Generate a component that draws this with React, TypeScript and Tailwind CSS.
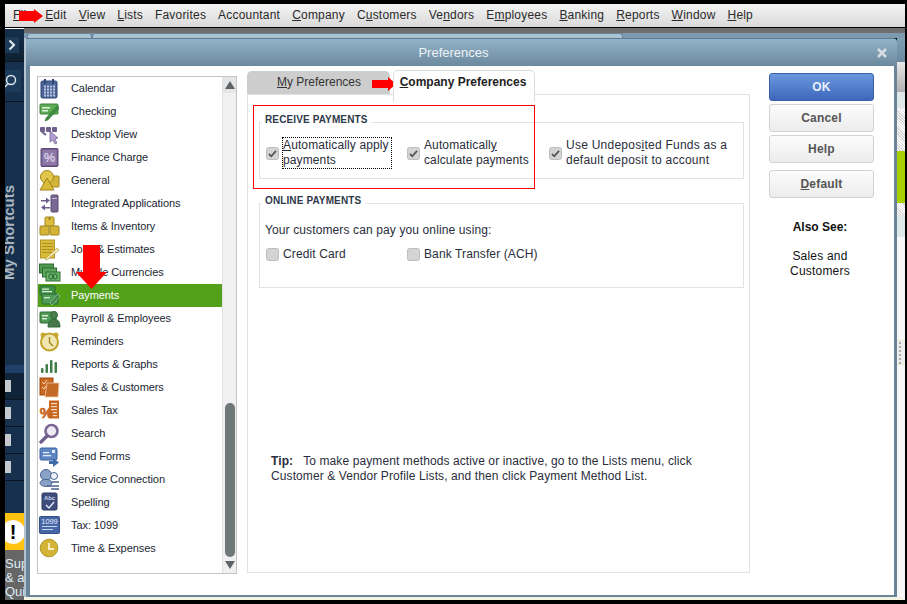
import React from 'react';

const S = ({ children }: { children: React.ReactNode }) => (
  <svg width="22" height="22" viewBox="0 0 22 22" className="shrink-0">{children}</svg>
);

const icons: Record<string, React.ReactNode> = {
  Calendar: (
    <>
      <rect x="2" y="3" width="16" height="17" rx="1.5" fill="#4c6496" stroke="#2f4778" />
      <rect x="5" y="1" width="2" height="5" fill="#2f4778" />
      <rect x="13" y="1" width="2" height="5" fill="#2f4778" />
      {[8, 11, 14, 17].map((y) => [5, 8, 11, 14].map((x) => <rect key={x + '-' + y} x={x} y={y - 0.5} width="2" height="2" fill="#b9c6e0" />))}
    </>
  ),
  Checking: (
    <>
      <rect x="1" y="3" width="18" height="10" rx="1" fill="#5cab55" stroke="#3f7f3c" />
      <rect x="3" y="6" width="8" height="1.5" fill="#e4f3df" />
      <rect x="3" y="9" width="6" height="1.5" fill="#e4f3df" />
      <path d="M7 17 L18 5 L20 7 L9 19 L6 20 Z" fill="#3e8f43" stroke="#2c6b32" strokeWidth="0.5" />
    </>
  ),
  'Desktop View': (
    <>
      <rect x="1" y="3" width="5" height="5" rx="1" fill="#6e5f8c" />
      <rect x="7" y="3" width="5" height="5" rx="1" fill="#6e5f8c" />
      <rect x="13" y="3" width="5" height="5" rx="1" fill="#6e5f8c" />
      <path d="M11 7 L19 14 L16 15 L18 19 L16 20 L14 16 L11 18 Z" fill="#b19ed0" stroke="#6e5f8c" strokeWidth="0.7" />
      <path d="M3 8 L7 11" stroke="#6e5f8c" strokeWidth="2" />
    </>
  ),
  'Finance Charge': (
    <>
      <rect x="2" y="1.5" width="17" height="18" rx="1" fill="#75608f" stroke="#5c4a75" />
      <rect x="3.5" y="3" width="14" height="15" fill="#8d78a8" />
      <text x="10.5" y="15" textAnchor="middle" fontSize="13" fontWeight="700" fill="#d8cde6">%</text>
    </>
  ),
  General: (
    <>
      <rect x="10" y="6" width="10" height="11" rx="1" fill="#d3b436" stroke="#a08520" />
      <circle cx="8" cy="7" r="6.5" fill="#e2c64a" stroke="#a08520" />
      <path d="M8 8 L15 20 L1 20 Z" fill="#d9bb38" stroke="#a08520" />
    </>
  ),
  'Integrated Applications': (
    <>
      <rect x="12" y="2" width="7" height="17" rx="1" fill="#7a6894" stroke="#5c4a75" />
      <rect x="13" y="5" width="5" height="1" fill="#c6badb" />
      <path d="M2 7 H7 V4.5 L11 7.5 L7 10.5 V8.5 H2 Z" fill="#6e5f8c" />
      <path d="M11 14 H6 V11.5 L2 14.5 L6 17.5 V15.5 H11 Z" fill="#6e5f8c" />
    </>
  ),
  'Items & Inventory': (
    <>
      <rect x="6" y="1" width="9" height="9" rx="1" fill="#dcbd3c" stroke="#a08520" />
      <rect x="1" y="10" width="9" height="9" rx="1" fill="#d3b436" stroke="#a08520" />
      <rect x="11" y="10" width="9" height="9" rx="1" fill="#d3b436" stroke="#a08520" />
      <rect x="9.5" y="1" width="2" height="3" fill="#a08520" />
    </>
  ),
  'Jobs & Estimates': (
    <>
      <rect x="1.5" y="1" width="14" height="18" fill="#d9bb38" stroke="#b0952a" />
      {[4, 7, 10, 13].map((y) => <rect key={y} x="3" y={y} width="11" height="1" fill="#a98f25" />)}
      <path d="M6 20 L18 9 L20 11 L8 21 Z" fill="#f1e7b8" stroke="#b0952a" strokeWidth="0.6" />
    </>
  ),
  'Multiple Currencies': (
    <>
      <rect x="0.5" y="2" width="14" height="9" fill="#4f9850" stroke="#2f6b34" />
      <rect x="3.5" y="6" width="14" height="9" fill="#5aa75a" stroke="#2f6b34" />
      <rect x="7" y="10" width="14" height="9" fill="#6ab86a" stroke="#2f6b34" />
      <rect x="10" y="12" width="3.5" height="5" rx="1.5" fill="none" stroke="#21592a" />
      <rect x="14.5" y="12" width="3.5" height="5" rx="1.5" fill="none" stroke="#21592a" />
    </>
  ),
  Payments: (
    <>
      <rect x="1" y="1" width="15" height="9" rx="1" fill="#3f8f47" stroke="#2a6934" />
      <rect x="3" y="3.5" width="7" height="1.3" fill="#d7ecd3" />
      <rect x="3" y="6" width="10" height="1.3" fill="#d7ecd3" />
      <rect x="3" y="9" width="16" height="10" rx="1" fill="#4d9c55" stroke="#2a6934" />
      <rect x="5" y="12" width="6" height="1.3" fill="#d7ecd3" />
      <path d="M11 18 L19 9 L21 11 L13 20 Z" fill="#3b7f44" stroke="#d7ecd3" strokeWidth="0.5" />
    </>
  ),
  'Payroll & Employees': (
    <>
      <rect x="1" y="4" width="16" height="11" rx="1" fill="#4f9a55" stroke="#2f6b34" />
      <rect x="3" y="7" width="6" height="1.4" fill="#e0f0dc" />
      <rect x="3" y="10" width="5" height="1.4" fill="#e0f0dc" />
      <circle cx="15" cy="7" r="3.5" fill="#4b7d4e" stroke="#2f6b34" />
      <path d="M9 19 Q9 11 15 11 Q21 11 21 19 Z" fill="#47774a" stroke="#2f6b34" />
    </>
  ),
  Reminders: (
    <>
      <circle cx="4" cy="4" r="2.5" fill="#c9a92f" />
      <circle cx="17" cy="4" r="2.5" fill="#c9a92f" />
      <circle cx="10.5" cy="11" r="8.5" fill="#f0e6b2" stroke="#c4a42c" strokeWidth="2" />
      <path d="M10.5 6 V11.5 L14 15" fill="none" stroke="#a08520" strokeWidth="1.4" />
    </>
  ),
  'Reports & Graphs': (
    <>
      <rect x="2" y="14" width="2.5" height="5" rx="1" fill="#3e7d46" />
      <rect x="6.5" y="10" width="2.5" height="9" rx="1" fill="#3e7d46" />
      <rect x="11" y="6" width="2.5" height="13" rx="1" fill="#3e7d46" />
      <rect x="15.5" y="8" width="2.5" height="11" rx="1" fill="#3e7d46" />
    </>
  ),
  'Sales & Customers': (
    <>
      <rect x="1" y="1" width="13" height="17" fill="#c9661f" stroke="#9a4c14" />
      <path d="M8 6 L20 6 L19 20 L6 20 Z" fill="#c36a27" stroke="#f0c9a2" strokeWidth="0.8" />
      <path d="M3 5 L5 7 L8 3 M3 10 L5 12 L7 9" fill="none" stroke="#f5dcc0" strokeWidth="1" />
    </>
  ),
  'Sales Tax': (
    <>
      <rect x="10" y="0.5" width="10" height="18" fill="#c9661f" />
      {[3, 6, 9, 12, 15].map((y) => <rect key={y} x="12" y={y} width="6" height="1.2" fill="#f5dcc0" />)}
      <text x="7.5" y="18" textAnchor="middle" fontSize="15" fontWeight="700" fill="#c9661f" stroke="#c9661f" strokeWidth="0.6">%</text>
    </>
  ),
  Search: (
    <>
      <circle cx="12.5" cy="8" r="6" fill="#efeaf4" stroke="#7b6795" strokeWidth="2.6" />
      <path d="M8 13 L2 19" stroke="#6e5f8c" strokeWidth="3.4" strokeLinecap="round" />
    </>
  ),
  'Send Forms': (
    <>
      <rect x="1" y="2" width="17" height="12" rx="1.5" fill="#5f86c4" stroke="#3a5f9c" />
      <rect x="4" y="6" width="6" height="1.3" fill="#e3ecf8" />
      <rect x="4" y="9" width="8" height="1.3" fill="#e3ecf8" />
      <rect x="13" y="4" width="3" height="3" fill="#e3ecf8" />
      <path d="M10 15 H14 V12 L20 16.5 L14 21 V18 H10 Z" fill="#3f6ba8" />
    </>
  ),
  'Service Connection': (
    <>
      <circle cx="7" cy="6" r="5.5" fill="#8aa2c6" stroke="#4a648f" />
      <ellipse cx="7" cy="14" rx="6" ry="3.5" fill="#8aa2c6" stroke="#4a648f" />
      <circle cx="15" cy="7" r="3.5" fill="#eef2f8" stroke="#4a648f" />
      <path d="M8 17 H20 M12 13 H20 M12 20 H20" stroke="#4a648f" strokeWidth="1.4" />
    </>
  ),
  Spelling: (
    <>
      <rect x="3" y="1" width="15" height="17" rx="1.5" fill="#3d4e7d" stroke="#2a3860" />
      <text x="10.5" y="8" textAnchor="middle" fontSize="6" fontWeight="700" fill="#c8d2ea">Abc</text>
      <path d="M7 13 L10 16 L15 10" fill="none" stroke="#dfe6f5" strokeWidth="1.5" />
    </>
  ),
  'Tax: 1099': (
    <>
      <rect x="0.5" y="1.5" width="20" height="17" rx="1" fill="#4766a6" stroke="#334e85" />
      <text x="10.5" y="9" textAnchor="middle" fontSize="7.5" fill="#e3ebfa">1099</text>
      <rect x="3" y="11" width="15" height="1" fill="#c9d6ef" />
      <rect x="3" y="14" width="11" height="1" fill="#c9d6ef" />
    </>
  ),
  'Time & Expenses': (
    <>
      <circle cx="10" cy="10" r="8.8" fill="#d3b436" stroke="#b0952a" />
      <path d="M10 5 V11 H15" fill="none" stroke="#f6edc2" strokeWidth="2" />
    </>
  ),
};

const names = Object.keys(icons);

const Check = ({ checked }: { checked?: boolean }) => (
  <svg width="13" height="13" viewBox="0 0 13 13" className="shrink-0">
    <rect x="0.5" y="0.5" width="12" height="12" rx="2" fill="#d4d4d4" stroke="#bdbdbd" />
    {checked && <path d="M3 7 L5.3 9.3 L10 3.8" fill="none" stroke="#555" strokeWidth="1.8" />}
  </svg>
);

const menu: [string, string, string][] = [
  ['', 'F', 'ile'], ['', 'E', 'dit'], ['', 'V', 'iew'], ['', 'L', 'ists'], ['Favorites', '', ''], ['Accountant', '', ''],
  ['', 'C', 'ompany'], ['C', 'u', 'stomers'], ['Ve', 'n', 'dors'], ['E', 'm', 'ployees'], ['', 'B', 'anking'], ['', 'R', 'eports'], ['', 'W', 'indow'], ['', 'H', 'elp'],
];

const Btn = ({ children, className = 'border-[#d2d2d2] from-[#fcfcfc] to-[#ececec] text-[#555]' }: { children: React.ReactNode; className?: string }) => (
  <div className={`h-[28px] w-[105px] shrink-0 flex items-center justify-center rounded-[3px] border bg-gradient-to-b text-[12px] font-bold ${className}`}>
    {children}
  </div>
);

const Legend = ({ children }: { children: React.ReactNode }) => (
  <div className="absolute left-[1px] top-[-10px] bg-white px-[4px] text-[10px] leading-[14px] font-bold text-[#2f3a4a]">{children}</div>
);

export default function App() {
  return (
    <div className="relative w-[907px] h-[604px] overflow-hidden bg-black flex flex-col pt-[4px] pb-[4px] pl-[5px] pr-[2px] font-['Liberation_Sans',Arial,sans-serif] text-[#1b1f33]">
      {/* menu bar */}
      <div className="h-[23px] shrink-0 flex items-center gap-[12px] pl-[8px] pb-[1px] bg-gradient-to-b from-[#f4f4f4] to-[#d9d9d9] text-[12px] tracking-[0.2px] text-[#2a2a2a]">
        {menu.map(([a, u, b], i) => (
          <span key={i}>{a}{u && <u>{u}</u>}{b}</span>
        ))}
      </div>
      <div className="h-px shrink-0 bg-black" />

      <div className="flex-1 flex min-h-0">
        {/* left rail */}
        <div className="w-[19px] shrink-0 flex flex-col overflow-hidden bg-[#16304d]">
          <div className="h-px bg-white" />
          <div className="h-[33px] pt-[8px] bg-gradient-to-b from-[#16304d] to-[#0f2033] border-b border-[#0b1622]">
            <div className="h-[16px] w-[14px] bg-[#1d3a59] flex items-center justify-center">
              <svg width="8" height="12" viewBox="0 0 8 12"><path d="M1.5 1.5 L6 6 L1.5 10.5" fill="none" stroke="#e6edf2" strokeWidth="2" /></svg>
            </div>
          </div>
          <div className="h-[40px] pt-[8px] border-b border-[#0b1622]">
            <div className="h-[22px] w-[16px] bg-[#1c3a5a] flex items-center">
              <svg width="14" height="16" viewBox="0 0 14 16"><circle cx="6" cy="7" r="4.5" fill="none" stroke="#dbe4ec" strokeWidth="1.5" /><path d="M3 10.5 L0 14" stroke="#dbe4ec" strokeWidth="1.5" /></svg>
            </div>
          </div>
          <div className="h-[177px] flex items-end">
            <div className="[writing-mode:vertical-rl] rotate-180 ml-[-4px] mb-[-1px] text-[15px] leading-[15px] font-bold whitespace-nowrap text-[#aab5c0]">My Shortcuts</div>
          </div>
          <div className="h-[86px]" />
          <div className="h-[8px] bg-[#1f4068]" />
          {[0, 1, 2, 3].map((i) => (
            <div key={i} className={`h-[27px] flex items-center border-b border-[#0b1622] ${i === 0 ? 'bg-[#0f2438]' : ''}`}>
              <div className="h-[12px] w-[6px] bg-[#c4c9cd]" />
            </div>
          ))}
          <div className="h-[32px]" />
          <div className="h-[37px] bg-[#ffc20e] flex items-center">
            <div className="ml-[-4px] h-[24px] w-[24px] shrink-0 rounded-full bg-white flex items-center justify-center text-[20px] font-bold leading-none text-black">!</div>
          </div>
          <div className="flex-1 bg-[#666] pt-[7px] text-[13px] leading-[14px] text-[#dcecf8] whitespace-nowrap">
            <div>Sup</div>
            <div>&amp; al</div>
            <div>Qui</div>
          </div>
        </div>

        {/* main */}
        <div className="flex-1 flex flex-col min-w-0">
          <div className="h-[5px] shrink-0 bg-[#6f6f6f]" />
          <div className="h-[5px] shrink-0 flex bg-[#7c9bb1]">
            <div className="ml-[3px] w-[65px] rounded-t-[3px] border border-b-0 border-[#6b8499] bg-[#a9c2d2]" />
            <div className="w-[531px] rounded-t-[3px] border border-b-0 border-[#6b8499] bg-[#a9c2d2]" />
          </div>

          <div className="flex-1 flex min-h-0">
            {/* dialog */}
            <div className="w-[873px] shrink-0 flex flex-col border-l-2 border-l-[#b3c3cf] rounded-tr-[4px] overflow-hidden">
              <div className="h-[28px] shrink-0 relative flex items-center justify-center bg-gradient-to-b from-[#93b3c8] to-[#6b899f] border-t border-[#5f7c92] text-[13px] text-[#eef3f6]">
                <span className="mr-[16px]">Preferences</span>
                <svg width="10" height="10" viewBox="0 0 10 10" className="absolute right-[10px] top-[9px]"><path d="M1 1 L9 9 M9 1 L1 9" stroke="#d5dde2" strokeWidth="2.6" /></svg>
              </div>
              <div className="flex-1 flex bg-white border-l-4 border-r-[3px] border-b-2 border-[#6b8499] pt-[4px]">
                {/* category list */}
                <div className="ml-[7px] mt-[6px] w-[200px] h-[498px] shrink-0 flex border border-[#c4c4c4]">
                  <div className="flex-1 border-r border-[#e2e2e2] text-[11px] tracking-[-0.08px] text-[#1b1f33]">
                    {names.map((n) => (
                      <div key={n} className={`h-[23px] flex items-center pl-[1px] ${n === 'Payments' ? 'bg-[#53a01a] text-white' : ''}`}>
                        <S>{icons[n]}</S>
                        <span className="ml-[10px] whitespace-nowrap">{n}</span>
                      </div>
                    ))}
                  </div>
                  <div className="w-[13px] shrink-0 flex flex-col items-center bg-[#f0f0f0]">
                    <div className="h-[16px] w-full flex items-center justify-center bg-[#e6e6e6]">
                      <svg width="10" height="8" viewBox="0 0 10 8"><path d="M5 0 L10 8 H0 Z" fill="#5f6468" /></svg>
                    </div>
                    <div className="flex-1" />
                    <div className="h-[154px] w-[10px] rounded-[5px] bg-[#6f7878]" />
                    <div className="h-[16px] w-full flex items-center justify-center">
                      <svg width="10" height="8" viewBox="0 0 10 8"><path d="M5 8 L10 0 H0 Z" fill="#5f6468" /></svg>
                    </div>
                  </div>
                </div>

                {/* tabs + panel */}
                <div className="ml-[10px] w-[503px] shrink-0 flex flex-col">
                  <div className="h-[24px] flex items-end">
                    <div className="h-[23px] w-[143px] rounded-t-[5px] bg-[#cdcdcd] flex items-center justify-center pb-[2px] pl-[1px] text-[12px] text-[#333]">
                      <span><u>M</u>y Preferences</span>
                    </div>
                    <div className="relative z-10 ml-[3px] h-[32px] mb-[-8px] w-[142px] rounded-t-[5px] border border-b-0 border-[#dcdcdc] bg-white pb-[10px] pr-[2px] flex items-center justify-center text-[12px] font-bold text-[#222]">
                      <span><u>C</u>ompany Preferences</span>
                    </div>
                  </div>
                  <div className="w-[503px] h-[479px] border border-[#e2e2e2] flex flex-col pl-[11px]">
                    <div className="relative mt-[27px] w-[485px] h-[57px] shrink-0 border border-[#e2e2e2] flex pl-[6px] pt-[15px] text-[12px] leading-[15px] tracking-[0.12px] text-[#2a2d3a]">
                      <Legend>RECEIVE PAYMENTS</Legend>
                      <div className="w-[141px] flex items-center gap-[3px] h-[30px]">
                        <Check checked />
                        <div className="border border-dotted border-black pr-[2px] whitespace-nowrap"><u>A</u>utomatically apply<br />payments</div>
                      </div>
                      <div className="w-[142px] flex items-center gap-[4px] h-[30px]">
                        <Check checked />
                        <div className="whitespace-nowrap">Automaticall<u>y</u><br />calculate payments</div>
                      </div>
                      <div className="flex items-center gap-[4px] h-[30px] tracking-[0.25px]">
                        <Check checked />
                        <div className="whitespace-nowrap">Use Undepos<u>i</u>ted Funds as a<br />default deposit to account</div>
                      </div>
                    </div>
                    <div className="relative mt-[24px] w-[485px] h-[85px] shrink-0 border border-[#e2e2e2] pl-[5px] pt-[19px] text-[12px] leading-[15px] tracking-[0.12px] text-[#2a2d3a]">
                      <Legend>ONLINE PAYMENTS</Legend>
                      <div>Your customers can pay you online using:</div>
                      <div className="flex mt-[9px] pl-px">
                        <div className="w-[141px] flex items-center gap-[4px]"><Check />Credit Card</div>
                        <div className="flex items-center gap-[4px]"><Check />Bank Transfer (ACH)</div>
                      </div>
                    </div>
                    <div className="mt-[166px] ml-[12px] text-[12px] leading-[15px] tracking-[0.1px] text-[#2a2d3a] whitespace-nowrap">
                      <div><b className="mr-[10px]">Tip:</b>To make payment methods active or inactive, go to the Lists menu, click</div>
                      <div>Customer &amp; Vendor Profile Lists, and then click Payment Method List.</div>
                    </div>
                  </div>
                </div>

                {/* buttons */}
                <div className="ml-[19px] w-[105px] shrink-0 flex flex-col pt-[3px] items-center text-[12px] tracking-[0.2px] text-[#111]">
                  <Btn className="border-[#3a5fa8] from-[#6b98dd] to-[#3f67bc] text-[#e9f0fa]">OK</Btn>
                  <div className="h-[3px] shrink-0" />
                  <Btn>Cancel</Btn>
                  <div className="h-[3px] shrink-0" />
                  <Btn>Help</Btn>
                  <div className="h-[7px] shrink-0" />
                  <Btn><span><u>D</u>efault</span></Btn>
                  <div className="mt-[22px] mr-[3px] font-bold leading-[15px] tracking-normal">Also See:</div>
                  <div className="mt-[14px] mr-[3px] leading-[15px] text-center">Sales and<br />Customers</div>
                </div>
              </div>
            </div>

            {/* background window peeking out at the right */}
            <div className="flex-1 flex flex-col bg-[#f7f7f7]">
              <div className="h-[24px] bg-gradient-to-b from-[#7f9fb4] to-[#6b899f]" />
              <div className="h-[30px] bg-gradient-to-b from-[#e8e8e8] to-[#b0b0b0]" />
              <div className="h-[16px] bg-[#dfe8e8]" />
              <div className="h-[43px] bg-[repeating-linear-gradient(45deg,#d8d8d8_0,#d8d8d8_1px,#ffffff_1px,#ffffff_2px)]" />
              <div className="h-[52px] bg-[#a8cf00]" />
              <div className="h-[12px] bg-[repeating-linear-gradient(45deg,#d8d8d8_0,#d8d8d8_1px,#ffffff_1px,#ffffff_2px)]" />
              <div className="h-[22px] bg-[#dfe8e8]" />
              <div className="h-[103px]" />
              <div className="h-[25px] bg-[#eee] border-y border-[#e8e6cf] flex flex-col items-center justify-center gap-[2px] pr-[2px]">
                {[0, 1, 2, 3, 4, 5].map((i) => <div key={i} className="h-[2px] w-[2px] bg-[#aaa]" />)}
              </div>
            </div>
          </div>
          <div className="h-[3px] shrink-0 bg-[#f4f3e4]" />
        </div>
      </div>

      {/* annotations over the screenshot */}
      <svg viewBox="0 0 24 14" className="absolute left-[19px] top-[9px] w-[24px] h-[14px]"><path d="M0 2 H15 V0 L24 7 L15 14 V12 H0 Z" fill="#ff0000" /></svg>
      <svg viewBox="0 0 24 14" className="absolute left-[372px] top-[77px] w-[24px] h-[14px]"><path d="M0 3 H16 V0 L24 7 L16 14 V11 H0 Z" fill="#ff0000" /></svg>
      <svg viewBox="0 0 31 44" className="absolute left-[76px] top-[245px] w-[31px] h-[44px]"><path d="M7 0 H24 V27 H31 L15.5 44 L0 27 H7 Z" fill="#ff0000" /></svg>
      <div className="absolute left-[253px] top-[105px] w-[282px] h-[84px] border border-[#ff0000]" />
    </div>
  );
}
